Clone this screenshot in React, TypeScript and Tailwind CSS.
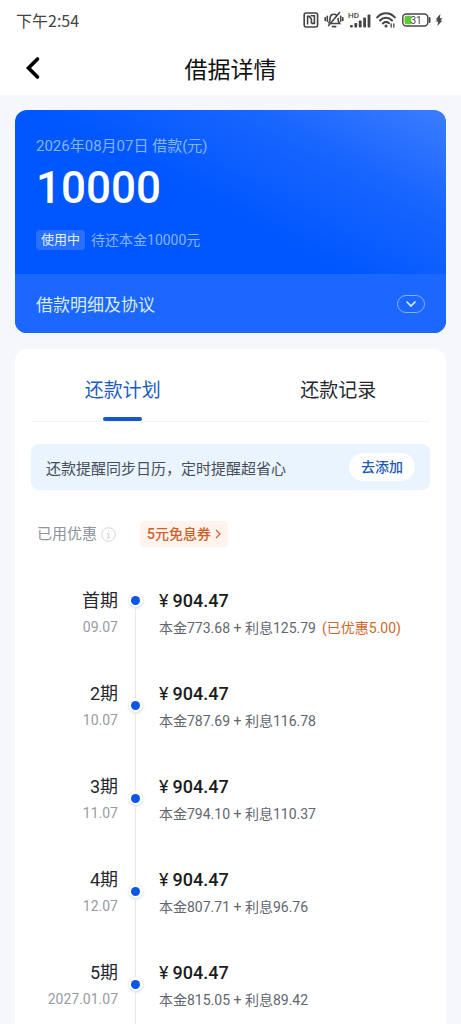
import { useState } from 'react';
import clsx from 'clsx';

type Installment = {
  term: string;
  date: string;
  amount: string;
  principal: string;
  interest: string;
  discount?: string;
};

const installments: Installment[] = [
  { term: '首期', date: '09.07', amount: '904.47', principal: '773.68', interest: '125.79', discount: '5.00' },
  { term: '2期', date: '10.07', amount: '904.47', principal: '787.69', interest: '116.78' },
  { term: '3期', date: '11.07', amount: '904.47', principal: '794.10', interest: '110.37' },
  { term: '4期', date: '12.07', amount: '904.47', principal: '807.71', interest: '96.76' },
  { term: '5期', date: '2027.01.07', amount: '904.47', principal: '815.05', interest: '89.42' },
];

const tabs = ['还款计划', '还款记录'];

const NfcIcon = () => (
  <svg width="16" height="16" viewBox="0 0 16 16" fill="none" stroke="currentColor" strokeWidth="1.6" aria-hidden="true">
    <rect x="1.2" y="1" width="13.4" height="14" rx="2" />
    <path d="M4.6 12.6V4.4h1.6L8.4 7v4.600M8.400 11.400h3V3.800H7.600" />
  </svg>
);

const MutedBellIcon = () => (
  <svg width="20" height="18" viewBox="0 0 20 18" fill="none" stroke="currentColor" strokeWidth="1.6" strokeLinecap="round" aria-hidden="true">
    <path d="M4.8 11.8c1.2-1.2 1.3-2.4 1.3-4.3C6.1 4.9 7.7 3.2 10 3.2c1 0 1.9.3 2.5.9M14 7.5c0 2.2.3 3.4 1.6 5H7.5M15.6 1.5 4.6 14.6" />
    <path d="M8.4 15.6h3.4M1.2 6.8v2.6M3.3 5.2v5M16.7 5.2v5M18.8 6.8v2.6" />
  </svg>
);

const SignalIcon = () => (
  <svg className="overflow-visible" width="22" height="18" viewBox="0 0 22 18" fill="currentColor" aria-hidden="true">
    <text x="-1" y="7" fontSize="8" fontWeight="500">HD</text>
    <rect x="1" y="14" width="2.8" height="2.5" rx=".8" />
    <rect x="5.4" y="12" width="2.8" height="4.5" rx=".8" />
    <rect x="9.8" y="9.5" width="2.8" height="7" rx=".8" />
    <rect x="14.2" y="6.5" width="2.8" height="10" rx=".8" />
    <rect x="18.6" y="3.5" width="2.8" height="13" rx=".8" />
  </svg>
);

const WifiIcon = () => (
  <svg width="20" height="16" viewBox="0 0 20 16" fill="none" stroke="currentColor" strokeWidth="2" strokeLinecap="round" aria-hidden="true">
    <path d="M1.2 5.4C6-.1 14-.1 18.8 5.4M4 8.5c3.4-3.7 8.6-3.7 12 0M6.8 11.4c2-1.9 4.4-1.9 6.2-.2" />
    <circle cx="10" cy="14" r="1.5" fill="currentColor" stroke="none" />
    <path d="M15.2 12v3M17.8 12v3" strokeWidth="1.3" />
  </svg>
);

const BatteryIcon = () => (
  <svg width="30" height="14" viewBox="0 0 30 14" aria-hidden="true">
    <rect x=".8" y="1" width="25" height="12" rx="3.5" fill="none" stroke="#444" strokeWidth="1.4" />
    <path d="M4.5 2.7h4.7v8.6H4.5a2 2 0 0 1-2-2V4.7a2 2 0 0 1 2-2z" fill="#5ccb35" />
    <path d="M27.6 5v4" stroke="#444" strokeWidth="1.8" strokeLinecap="round" />
    <text x="14" y="10.5" fontSize="10" textAnchor="middle" fill="#444">31</text>
  </svg>
);

const BoltIcon = () => (
  <svg width="8" height="14" viewBox="0 0 8 14" fill="currentColor" aria-hidden="true">
    <path d="M5.4 1 .6 6.4h2.2L.4 8.6h2.8L2.4 13l5-5.6H5.2l2.400-2.200H4.800z" />
  </svg>
);

const StatusBar = () => (
  <div className="flex h-10 items-center justify-between pl-4 pr-[18px] text-[#444]">
    <span className="font-['Noto_Sans_CJK_SC',sans-serif] text-base">下午2:54</span>
    <div className="flex items-center">
      <NfcIcon />
      <span className="ml-[5px]"><MutedBellIcon /></span>
      <span className="ml-[5px]"><SignalIcon /></span>
      <span className="ml-[5px]"><WifiIcon /></span>
      <span className="ml-1.5"><BatteryIcon /></span>
      <span className="ml-[3px]"><BoltIcon /></span>
    </div>
  </div>
);

const LoanCard = () => (
  <section className="overflow-hidden rounded-xl bg-[#0057ff] bg-[linear-gradient(208deg,#3b7dff_0%,#1a66ff_22%,#0057ff_48%)] text-white">
    <div className="px-[21px] py-6">
      <p className="text-[15px] leading-6 text-[#85b3ff]">2026年08月07日 借款(元)</p>
      <p className="text-[44px] leading-[60px] font-medium">10000</p>
      <div className="mt-3 flex items-center gap-1.5">
        <span className="rounded bg-[#2a70ff] px-[5px] text-[13px] leading-5 text-[#e2f0ff]">使用中</span>
        <span className="text-sm text-[#85b3ff]">待还本金10000元</span>
      </div>
    </div>
    <button type="button" className="flex h-[59px] w-full items-center justify-between bg-[#1b67ff] px-[21px]">
      <span className="pt-1 text-[17px] text-[#d8eaff]">借款明细及协议</span>
      <span className="flex h-[18px] w-7 items-center justify-center rounded-full border border-[#86b2ff]">
        <svg width="12" height="8" viewBox="0 0 12 8" fill="none" stroke="#d8f0ff" strokeWidth="1.6" aria-hidden="true">
          <path d="m1.5 1.5 4.5 4.5 4.5-4.5" />
        </svg>
      </span>
    </button>
  </section>
);

const InstallmentRow = ({ item, first }: { item: Installment; first: boolean }) => (
  <li className="flex h-[93px]">
    <div className="w-[103px] shrink-0 text-right">
      <p className="text-lg leading-8 text-[#25282d]">{item.term}</p>
      <p className="text-sm leading-5 text-[#979ba3]">{item.date}</p>
    </div>
    <div className={clsx('flex w-[35px] shrink-0 flex-col items-center', first && 'pt-2')}>
      {!first && <span className="h-5 w-px bg-[#e8e9ed]" />}
      <span className="flex size-3.5 shrink-0 items-center justify-center rounded-full bg-white shadow-[0_1px_3px_rgba(0,40,120,0.2)]">
        <span className="size-[9px] rounded-full bg-[#0a56e8]" />
      </span>
      <span className="w-px flex-1 bg-[#e8e9ed]" />
    </div>
    <div className="pl-1.5 whitespace-nowrap">
      <p className="text-lg leading-8 text-[#1a1c20]">
        <span className="mr-1">¥</span>
        <span className="font-medium">{item.amount}</span>
      </p>
      <p className="text-sm leading-[22px] text-[#62666f]">
        本金{item.principal} + 利息{item.interest}
        {item.discount && <span className="ml-1.5 text-[#d0672f]">(已优惠{item.discount})</span>}
      </p>
    </div>
  </li>
);

export default function App() {
  const [activeTab, setActiveTab] = useState<string>(tabs[0]);

  return (
    <div className="flex h-screen flex-col overflow-hidden bg-[#f5f7fd] font-[Roboto,'Noto_Sans_CJK_SC',sans-serif]" lang="zh-CN">
      <header className="shrink-0 bg-white">
        <StatusBar />
        <div className="grid h-[55px] grid-cols-[64px_1fr_64px] items-center">
          <button type="button" aria-label="返回" className="flex h-full items-center pl-[25px]">
            <svg width="16" height="24" viewBox="0 0 16 24" fill="none" stroke="#000" strokeWidth="3.6" strokeLinecap="round" aria-hidden="true">
              <path d="M12.5 3 3.5 12l9 9" />
            </svg>
          </button>
          <h1 className="pt-2 text-center text-[23px] text-[#111]">借据详情</h1>
        </div>
      </header>

      <main className="flex-1 overflow-y-auto px-[15px] pt-[15px] [scrollbar-width:none]">
        <LoanCard />

        <section className="mt-4 rounded-t-xl bg-white pt-4">
          <div role="tablist" className="grid grid-cols-2">
            {tabs.map((tab) => (
              <button
                key={tab}
                type="button"
                role="tab"
                aria-selected={tab === activeTab}
                onClick={() => setActiveTab(tab)}
                className={clsx('flex h-14 flex-col items-center justify-between text-[19px]', tab === activeTab ? 'text-[#1c5bbf]' : 'text-[#25282d]')}
              >
                <span className="leading-[52px]">{tab}</span>
                {tab === activeTab && <span className="h-1 w-[39px] rounded-full bg-[#1557d0]" />}
              </button>
            ))}
          </div>

          <div className="mx-4 border-t border-[#f3f4f6] pt-[22px]">
            <div className="flex h-[46px] items-center justify-between rounded-lg bg-[#eaf4ff] px-[15px] text-[15px] text-[#484e59]">
              <span className="pt-1">还款提醒同步日历，定时提醒超省心</span>
              <button type="button" className="h-7 w-[66px] shrink-0 rounded-full bg-white text-sm font-medium text-[#1c5bb5]">去添加</button>
            </div>

            <div className="mt-[31px] flex items-center pl-1.5">
              <span className="text-[15px] text-[#8e939c]">已用优惠</span>
              <svg className="ml-1" width="15" height="15" viewBox="0 0 15 15" fill="none" stroke="#d2d5da" aria-hidden="true">
                <circle cx="7.5" cy="7.5" r="6.8" />
                <path d="M7.5 3.5v1.3M6 6.6h1.5v4.2M5.7 10.9h3.6" strokeWidth="1.2" />
              </svg>
              <a href="#coupon" className="ml-6 flex h-[26px] items-center gap-1 rounded bg-[#fff3ee] px-[7px] text-sm font-medium text-[#cd6229]">
                5元免息券
                <svg width="6" height="10" viewBox="0 0 6 10" fill="none" stroke="currentColor" strokeWidth="1.2" aria-hidden="true">
                  <path d="m1 1 4 4-4 4" />
                </svg>
              </a>
            </div>
          </div>

          <ol className="mt-[38px]">
            {installments.map((item, i) => (
              <InstallmentRow key={item.term} item={item} first={i === 0} />
            ))}
          </ol>
        </section>
      </main>
    </div>
  );
}
